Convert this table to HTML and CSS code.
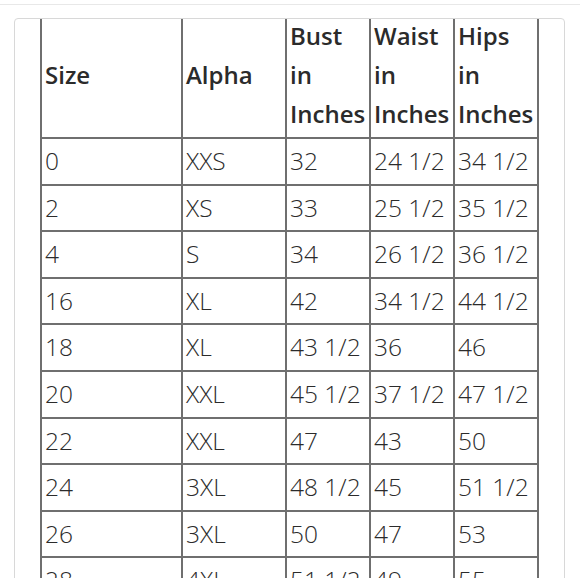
FILE: index.html
```html
<!DOCTYPE html>
<html>
<head>
<meta charset="utf-8">
<link rel="stylesheet" href="styles.css">
</head>
<body>
<div class="topbar"></div>
<div class="card">
  <table class="sizes">
    <colgroup>
      <col class="c1"><col class="c2"><col class="c3"><col class="c4"><col class="c5">
    </colgroup>
    <thead>
      <tr>
        <th>Size</th>
        <th>Alpha</th>
        <th>Bust in Inches</th>
        <th>Waist in Inches</th>
        <th>Hips in Inches</th>
      </tr>
    </thead>
    <tbody>
      <tr><td>0</td><td>XXS</td><td>32</td><td>24 1/2</td><td>34 1/2</td></tr>
      <tr><td>2</td><td>XS</td><td>33</td><td>25 1/2</td><td>35 1/2</td></tr>
      <tr><td>4</td><td>S</td><td>34</td><td>26 1/2</td><td>36 1/2</td></tr>
      <tr><td>16</td><td>XL</td><td>42</td><td>34 1/2</td><td>44 1/2</td></tr>
      <tr><td>18</td><td>XL</td><td>43 1/2</td><td>36</td><td>46</td></tr>
      <tr><td>20</td><td>XXL</td><td>45 1/2</td><td>37 1/2</td><td>47 1/2</td></tr>
      <tr><td>22</td><td>XXL</td><td>47</td><td>43</td><td>50</td></tr>
      <tr><td>24</td><td>3XL</td><td>48 1/2</td><td>45</td><td>51 1/2</td></tr>
      <tr><td>26</td><td>3XL</td><td>50</td><td>47</td><td>53</td></tr>
      <tr><td>28</td><td>4XL</td><td>51 1/2</td><td>49</td><td>55</td></tr>
    </tbody>
  </table>
</div>
</body>
</html>
```

FILE: styles.css
```css
html, body {
  margin: 0;
  padding: 0;
  overflow: hidden;
  background: #ffffff;
}
body {
  font-family: "Open Sans", "Noto Sans", sans-serif;
  color: #2b2b2b;
}
.topbar {
  height: 4px;
  border-bottom: 1px solid #e8e8e8;
}
.card {
  margin: 13px 15px 0 14px;
  border: 1px solid #d8d8d8;
  border-radius: 4px;
  padding: 0 26px 0 25px;
  height: 700px;
  overflow: hidden;
}
.sizes {
  margin-top: -3px;
  border-collapse: collapse;
  table-layout: fixed;
  width: 497px;
  font-size: 24px;
}
.c1 { width: 141px; }
.c2 { width: 104px; }
.c3 { width: 84px; }
.c4 { width: 84px; }
.c5 { width: 84px; }
.sizes th,
.sizes td {
  border: 2px solid #6f6f6f;
  text-align: left;
  padding: 0 2px 0 3px;
  white-space: normal;
  overflow: hidden;
}
.sizes thead tr th {
  border-top: none;
}
.sizes th {
  font-weight: 600;
  line-height: 39px;
  padding-bottom: 4px;
  vertical-align: middle;
}
.sizes td {
  font-weight: 300;
  font-size: 24.5px;
  line-height: 44.6px;
  white-space: nowrap;
}
```
